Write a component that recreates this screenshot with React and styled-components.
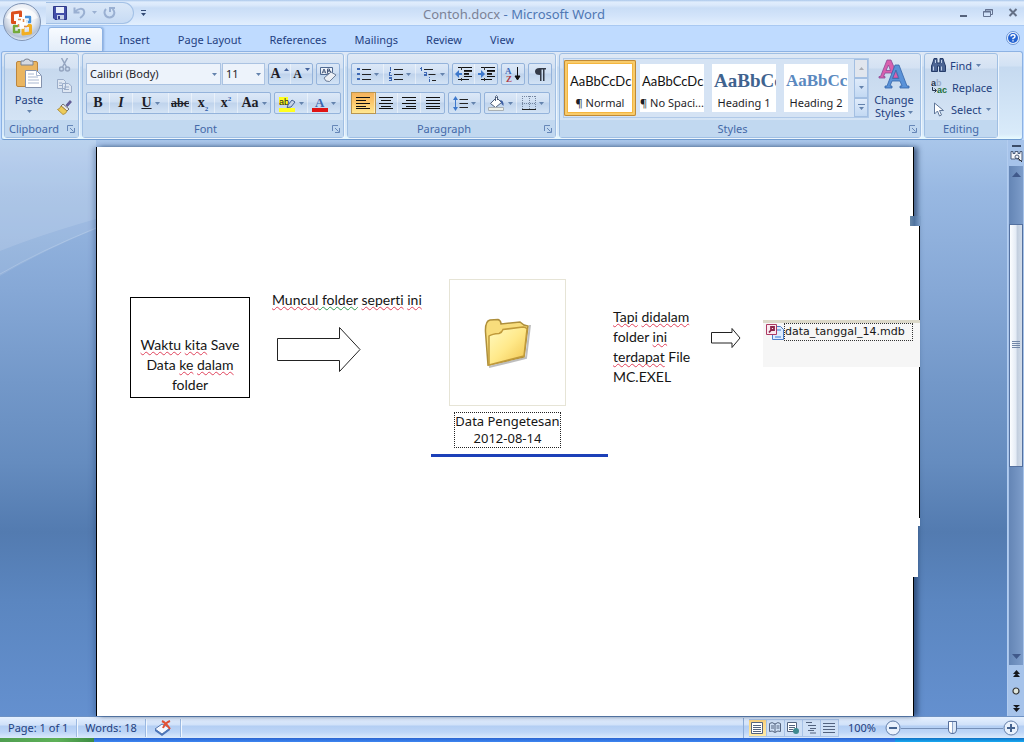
import * as React from 'react';
import styled, { createGlobalStyle, css } from 'styled-components';

const colors = {
  text: '#1f3f7f',
  label: '#4469a8',
  line: '#8fb2dc',
  arrow: '#6483ad',
  ink: '#1e1e28',
};

const uiFont = '"Noto Sans", "Open Sans", sans-serif';
const bodyFont = 'Lato, "Open Sans", sans-serif';

const GlobalStyle = createGlobalStyle`
  * {
    box-sizing: border-box;
  }

  body {
    margin: 0;
    font-family: ${uiFont};
    font-size: 11px;
    color: ${colors.text};
  }

  button,
  select {
    margin: 0;
    padding: 0;
    border: 0;
    background: none;
    color: inherit;
    font: inherit;
  }

  svg {
    display: block;
    flex: none;
  }
`;

const Window = styled.div`
  display: flex;
  flex-direction: column;
  min-height: 100vh;
  overflow: hidden;
`;

/* ---------- title bar ---------- */

const Header = styled.header`
  position: relative;
  background: #bfdbff;
`;

const TitleBar = styled.div`
  display: flex;
  align-items: center;
  height: 26px;
  padding: 0 6px 0 46px;
  border-bottom: 1px solid #a9c9f2;
  background: linear-gradient(#a9c6ea 0, #e0edfd 2px, #dbe9fb 5px, #c9ddf6 8px, #d3e4fa 16px, #e2effe 100%);
`;

const QuickAccess = styled.div`
  display: flex;
  align-items: center;
  gap: 6px;
  width: 88px;
  height: 22px;
  padding-left: 7px;
  border: 1px solid #a3c1e6;
  border-left: 0;
  border-radius: 0 11px 11px 0;
  background: linear-gradient(#dbe8f8, #c7dbf4);
`;

const PlainButton = styled.button`
  display: flex;
  align-items: center;
  justify-content: center;
  flex: none;
`;

const MoreButton = styled(PlainButton)`
  width: 18px;
  height: 20px;
`;

const Title = styled.h1`
  flex: 1;
  margin: 0;
  padding: 2px 52px 0 0;
  font-size: 13px;
  line-height: 20px;
  font-weight: 400;
  text-align: center;
  color: #5078b4;

  span {
    color: #7b8296;
  }
`;

const WindowButtons = styled.div`
  display: flex;
  align-items: center;
  justify-content: flex-end;
  gap: 15px;
  width: 90px;
`;

const OfficeButton = styled.button`
  position: absolute;
  top: 1px;
  left: 0;
  width: 44px;
  height: 44px;
`;

/* ---------- tabs ---------- */

const TabBar = styled.nav`
  display: flex;
  align-items: flex-end;
  height: 25px;
  padding: 0 4px 0 48px;
`;

const Tab = styled.button`
  height: 24px;
  margin-right: 4px;
  padding: 0 11px;
  border: 1px solid transparent;
  border-bottom: 0;
  border-radius: 3px 3px 0 0;
  line-height: 22px;
  white-space: nowrap;

  ${(props) =>
    props.$active &&
    css`
      border-color: #8db2e3;
      background: linear-gradient(#f8fbff, #e3edf9);
      box-shadow: 1px 0 2px rgba(90, 130, 190, 0.5);
    `}
`;

const HelpButton = styled(PlainButton)`
  height: 26px;
  margin-left: auto;
`;

/* ---------- ribbon ---------- */

const Ribbon = styled.div`
  display: flex;
  gap: 3px;
  height: 89px;
  margin: 0 1px;
  padding: 1px 2px;
  border: 1px solid #8db2e3;
  border-bottom-color: #6f9bd0;
  border-radius: 3px;
  background: linear-gradient(#dfe9f6, #d2e2f4 14px, #c6daf0 15px, #d9ebfa 82px, #e8fbff);
`;

const GroupBox = styled.section`
  display: flex;
  flex-direction: column;
  flex: none;
  width: ${(props) => props.$width}px;
  border: 1px solid #a0bfe3;
  border-radius: 3px;
  box-shadow: 1px 1px 0 #edf5fd;
  background: linear-gradient(#dfe9f5, #d4e2f3 14px, #c7d9ee 15px, #d8e7f7);
`;

const GroupBody = styled.div`
  display: flex;
  flex: 1;
  gap: 4px;
  padding: ${(props) => props.$top}px 3px 0;
`;

const GroupLabel = styled.div`
  display: flex;
  align-items: center;
  height: 17px;
  background: #c1d8f0;
  color: ${colors.label};

  span {
    flex: 1;
    line-height: 17px;
    text-align: center;
  }
`;

const Launcher = styled(PlainButton)`
  width: 15px;
  height: 15px;
`;

const Rows = styled.div`
  display: flex;
  flex-direction: column;
  gap: 7px;
`;

const Row = styled.div`
  display: flex;
  gap: 3px;
`;

const ButtonSet = styled.div`
  display: flex;
  height: 22px;
  border: 1px solid #94b3db;
  border-radius: 2px;
  background: linear-gradient(#dce8f7, #cfdff3 9px, #bfd3ec 10px, #d3e3f5);
`;

const Tool = styled.button`
  display: flex;
  align-items: center;
  justify-content: center;
  gap: 3px;
  width: ${(props) => props.$width || 23}px;
  border-right: 1px solid rgba(255, 255, 255, 0.45);
  font-family: 'Liberation Serif', serif;
  font-size: 14px;
  line-height: 18px;
  font-weight: 700;
  color: ${colors.ink};

  ${(props) =>
    props.$active &&
    css`
      background: linear-gradient(#f6b35d, #fbc468 40%, #ffe790);
      box-shadow: 0 0 0 1px #b9954f;
    `}

  &:last-child {
    border-right: 0;
  }

  small {
    font-size: 12px;
  }

  sub,
  sup {
    font-size: 7px;
    line-height: 0;
    color: #2c5ca8;
  }
`;

const Strike = styled.s`
  font-size: 12px;
`;

const ComboWrapper = styled.label`
  position: relative;
  display: block;
  width: ${(props) => props.$width}px;

  svg {
    position: absolute;
    right: 4px;
    top: 10px;
    pointer-events: none;
  }
`;

const Combo = styled.select`
  width: 100%;
  height: 22px;
  padding: 0 3px;
  appearance: none;
  border: 1px solid #abc3e2;
  border-radius: 0;
  background: #edf3fb;
  color: ${colors.ink};
  line-height: 20px;
`;

const Combos = styled.div`
  display: flex;
  gap: 1px;
`;

const Clipboard = styled.div`
  display: flex;
  gap: 7px;
`;

const BigButton = styled.button`
  display: flex;
  flex-direction: column;
  align-items: center;
  width: 42px;
  line-height: 13px;
`;

const BigLabel = styled.span`
  padding: 4px 0;
`;

const StackedLabel = styled.span`
  padding-top: 3px;
`;

const LabelLine = styled.span`
  display: flex;
  align-items: center;
  gap: 3px;
`;

const SmallIcons = styled.div`
  display: flex;
  flex-direction: column;
  align-items: center;
  gap: 7px;
`;

const EditList = styled.div`
  display: flex;
  flex-direction: column;
  padding-left: 3px;
`;

const EditButton = styled.button`
  display: flex;
  align-items: center;
  gap: 4px;
  height: 22px;
`;

/* ---------- style gallery ---------- */

const Gallery = styled.div`
  display: flex;
  height: 60px;
  border: 1px solid #b0c9e8;
  background: #d5e3f4;
`;

const StyleCard = styled.button`
  width: 72px;
  height: 56px;
  padding: 4px;
  margin-top: 1px;

  ${(props) =>
    props.$active &&
    css`
      border-radius: 2px;
      background: #f4b63f;
      box-shadow: inset 0 0 0 1px #c08a35, inset 0 0 0 3px #f8cb6b;
    `}
`;

const StylePreview = styled.span`
  display: block;
  width: 64px;
  height: 48px;
  overflow: hidden;
  background: #fff;
  color: ${colors.ink};
  text-align: center;
  white-space: nowrap;
`;

const Sample = styled.span`
  display: block;
  height: 31px;
  padding-left: 2px;
  overflow: hidden;
  text-align: left;
  font-family: ${(props) => (props.$heading ? '"Liberation Serif", serif' : bodyFont)};
  font-size: ${(props) => props.$size}px;
  line-height: 34px;
  font-weight: ${(props) => (props.$heading ? 700 : 400)};
  color: ${(props) => props.$color || '#111'};
`;

const SampleName = styled.span`
  display: block;
  line-height: 15px;
`;

const GalleryScroll = styled.div`
  display: flex;
  flex-direction: column;
  width: 14px;
  margin-left: 2px;
`;

const GalleryArrow = styled(PlainButton)`
  flex: 1;
  border: 1px solid #a3bfe2;
  background: ${(props) => (props.disabled ? '#e1e6ee' : 'linear-gradient(#dfebfa, #c3d9f3)')};
`;

/* ---------- work area ---------- */

const WorkArea = styled.div`
  display: flex;
  flex: 1;
`;

const Canvas = styled.main`
  position: relative;
  display: flex;
  flex: 1;
  min-width: 0;
  padding: 7px 93px 0 96px;
  background: linear-gradient(
    #a9c6ea 0,
    #98b8e2 9%,
    #86a8d6 26%,
    #7398c9 42%,
    #658cbf 56%,
    #537bb0 68%,
    #5b86c0 80%,
    #6490cf 100%
  );
`;

const Swoosh = styled.svg`
  position: absolute;
  top: 0;
  left: 0;
`;

const Page = styled.article`
  position: relative;
  flex: 1;
  min-width: 0;
  padding: 132px 0 0 33px;
  border: solid #000;
  border-width: 0 1px;
  background: #fff;
  box-shadow: 4px 0 5px rgba(30, 55, 95, 0.65), -3px 0 5px rgba(40, 70, 120, 0.3);
  color: #151515;
  font-family: ${bodyFont};
  font-variant-ligatures: none;
`;

/* pieces of the sheet that stick out past its right edge */
const Overhang = styled.span`
  position: absolute;
  left: 100%;
  top: ${(props) => props.$top}px;
  width: ${(props) => props.$width}px;
  height: ${(props) => props.$height}px;
  margin-left: -1px;
  border-right: ${(props) => (props.$edge ? '1px solid #000' : '0')};
  background: #fff;
`;

const Chip = styled.span`
  position: absolute;
  top: 69px;
  right: -8px;
  width: 11px;
  height: 10px;
  background: linear-gradient(90deg, #6888a8, #50739f 40%, #84a5cf);
`;

const Flow = styled.div`
  position: relative;
  display: flex;
  align-items: flex-start;

  > * {
    flex: none;
  }
`;

const StepBox = styled.div`
  width: 120px;
  height: 101px;
  margin-top: 18px;
  padding: 37px 4px 0;
  border: 1px solid #000;
  font-size: 14px;
  line-height: 20px;
  text-align: center;
`;

const ArrowStep = styled.div`
  width: 160px;
  margin: 11px 0 0 22px;
  font-size: 14px;
  line-height: 20px;
  white-space: nowrap;

  svg {
    margin: 17px 0 0 5px;
  }
`;

const FolderStep = styled.figure`
  display: flex;
  flex-direction: column;
  align-items: center;
  width: 177px;
  margin: 0 0 0 -1px;
  padding-right: 24px;
`;

const FolderFrame = styled.div`
  display: flex;
  align-items: center;
  justify-content: center;
  width: 117px;
  height: 127px;
  border: 1px solid #e6e4d6;
`;

const FolderName = styled.figcaption`
  margin: 6px 0;
  border: 1px dotted #222;
  font-family: ${uiFont};
  font-size: 13px;
  line-height: 17px;
  text-align: center;
  white-space: nowrap;
`;

const FolderRule = styled.div`
  align-self: flex-start;
  width: 177px;
  height: 3px;
  background: #1c40b8;
`;

const TextStep = styled.p`
  width: 92px;
  margin: 28px 5px 0;
  font-size: 14px;
  line-height: 20px;
  white-space: nowrap;
`;

const SmallArrow = styled.div`
  margin: 48px 22px 0 0;
`;

const FileStep = styled.div`
  display: flex;
  align-items: flex-start;
  width: 157px;
  height: 47px;
  margin-top: 41px;
  padding-left: 2px;
  border-top: 3px solid #dcd9c9;
  background: #f6f6f6;
`;

const FileName = styled.span`
  height: 18px;
  padding-right: 7px;
  border: 1px dotted #333;
  font-family: 'DejaVu Sans', sans-serif;
  font-size: 11px;
  line-height: 16px;
  white-space: nowrap;
`;

const Misspelt = styled.span`
  text-decoration: underline wavy ${(props) => (props.$grammar ? '#2f9a50' : '#e0415a')} 1px;
  text-decoration-skip-ink: none;
  text-underline-offset: 1px;
`;

/* ---------- scroll bar ---------- */

const ScrollColumn = styled.div`
  display: flex;
  flex-direction: column;
  align-items: center;
  flex: none;
  width: 17px;
  border-left: 1px solid #b3cdf0;
  background: #a6c3ea;
`;

const SplitHandle = styled.div`
  width: 9px;
  height: 2px;
  margin: 5px 0 3px;
  background: #3b4c68;
`;

const Track = styled.div`
  display: flex;
  flex-direction: column;
  align-items: center;
  flex: 1;
  width: 14px;
  margin-top: 3px;
  background: linear-gradient(90deg, #6485b5, #7d9dca);
`;

const TrackGap = styled.div`
  flex: ${(props) => props.$size};
`;

const Thumb = styled.div`
  display: flex;
  align-items: center;
  justify-content: center;
  flex: 242;
  width: 14px;
  border: 1px solid #53709f;
  background: linear-gradient(90deg, #fbfdff, #e4ebf5 50%, #c2cede 60%, #d4deeb);
`;

const ScrollButton = styled(PlainButton)`
  width: 14px;
  height: 17px;
`;

/* ---------- status bar ---------- */

const StatusBar = styled.footer`
  display: flex;
  align-items: center;
  height: 22px;
  border-top: 1px solid #6e92c4;
  background: linear-gradient(#e6f1ff, #d0e1f9 8px, #b3cef3 9px, #bdd5f7 15px, #dae9fc);
`;

const StatusItem = styled.div`
  display: flex;
  align-items: center;
  height: 18px;
  padding: 0 8px;
  border-right: 1px solid #9bb9e2;
  box-shadow: 1px 0 0 #f0f7ff;
`;

const ViewTools = styled.div`
  display: flex;
  align-items: center;
  height: 20px;
  margin-left: auto;
  padding: 0 5px;
  border-left: 1px solid #8eadd8;
`;

const ViewButton = styled(PlainButton)`
  width: 18px;
  height: 18px;
  border: 1px solid #a9c3e7;
  border-left: 0;
  background: ${(props) => (props.$active ? 'linear-gradient(#fbd37f, #ffeaa6)' : '#cfe0f6')};
`;

const ZoomValue = styled.span`
  padding: 0 9px;
`;

const ZoomSlider = styled.input`
  width: 102px;
  height: 16px;
  margin: 0;
  appearance: none;
  background: linear-gradient(#7690b8, #7690b8) 0 8px / 100% 1px no-repeat;

  &::-webkit-slider-thumb {
    appearance: none;
    width: 9px;
    height: 13px;
    border: 1px solid #566f9c;
    border-radius: 1px 1px 5px 5px;
    background: linear-gradient(90deg, #fff 3px, #8ea6cb 3px, #8ea6cb 4px, #dce8f8 4px);
  }
`;

const Taskbar = styled.div`
  display: flex;
  height: 4px;
  background: linear-gradient(#2a63cf, #3c86f2);
`;

const StartEdge = styled.div`
  width: 94px;
  background: linear-gradient(90deg, #4f9e50, #5eb158 60%, #3d8c43);
`;

const TrayEdge = styled.div`
  width: 129px;
  margin-left: auto;
  background: linear-gradient(#1070c4, #18aaf2);
`;

/* ---------- icons ---------- */

const Down = ({ color = colors.arrow }) => (
  <svg width="5" height="3" viewBox="0 0 5 3">
    <path d="M0 0h5L2.500 3z" fill={color} />
  </svg>
);

const OfficeLogo = () => (
  <svg width="44" height="44" viewBox="0 0 44 44">
    <defs>
      <radialGradient id="orb" cx=".5" cy=".35" r=".65">
        <stop offset="0" stopColor="#fff" />
        <stop offset=".55" stopColor="#e9edf4" />
        <stop offset=".85" stopColor="#b5c2d5" />
        <stop offset="1" stopColor="#e8f0fa" />
      </radialGradient>
    </defs>
    <circle cx="22" cy="21" r="18.5" fill="url(#orb)" stroke="#8195b5" />
    <path d="M6 17a17 15 0 0 1 32 0q-16 7-32 0z" fill="#fff" opacity=".65" />
    <g fill="none" strokeWidth="3" strokeLinejoin="round">
      <path d="M16 21.500h-3.500v-9.500l8-1v5" stroke="#dc4f1c" />
      <path d="M25 16h5v5h-4" stroke="#4590d8" strokeWidth="2.400" />
      <path d="M18 25h-4v6h5v-3" stroke="#74aa3a" strokeWidth="2.400" />
      <path d="M27 24.500h3.500v7.500l-7.500 1v-6" stroke="#f2ae22" />
    </g>
    <path d="M16 20h4v-4h4v4h4v4h-4v4h-4v-4h-4z" fill="#fff" opacity=".8" />
    <path d="M18 18.500h3M23.500 18v3M18.500 23v3M24 25.500h3" stroke="#e08a4c" strokeWidth="1.500" />
  </svg>
);

const SaveIcon = () => (
  <svg width="14" height="14" viewBox="0 0 14 14">
    <path d="M.5.5h13v13H2l-1.500-1.500z" fill="#434fa9" stroke="#2f3a88" />
    <path d="M3 1h8v6H3z" fill="#e9f0fb" />
    <path d="M4 9h7v4.500H4z" fill="#c7d3ea" />
    <path d="M5 10h2v3H5z" fill="#2f3a88" />
  </svg>
);

const UndoIcon = () => (
  <svg width="13" height="13" viewBox="0 0 13 13" fill="none" stroke="#9ab0d2" strokeWidth="2">
    <path d="M1.500 1.500v5h5M2 6c3-4 8-4 9-1s-1 5-4 7" />
  </svg>
);

const RedoIcon = () => (
  <svg width="13" height="13" viewBox="0 0 13 13" fill="none" stroke="#9ab0d2" strokeWidth="2">
    <path d="M3 3C0 6 2 11.500 6.500 11.500S13 6 9.500 3M7 6V2h5" />
  </svg>
);

const CustomizeIcon = () => (
  <svg width="5" height="6" viewBox="0 0 5 6">
    <path d="M0 0h5v1H0zM0 3h5L2.500 6z" fill="#334a75" />
  </svg>
);

const HelpIcon = () => (
  <svg width="14" height="14" viewBox="0 0 14 14">
    <circle cx="7" cy="7" r="6.500" fill="#eaf3ff" stroke="#6c94d4" />
    <circle cx="7" cy="7" r="5" fill="#2463d2" />
    <path d="M5 5.500Q5 3.800 7 3.800T9 5.500Q9 6.700 7 7.300v1M7 9.200v1.400" fill="none" stroke="#fff" strokeWidth="1.400" />
  </svg>
);

const LauncherIcon = () => (
  <svg width="8" height="8" viewBox="0 0 8 8" fill="none" stroke="#6687b8">
    <path d="M.5 6V.5H6M3 3l3.500 3.500M7.500 3v4.500H3" />
  </svg>
);

const PasteIcon = () => (
  <svg width="28" height="31" viewBox="0 0 28 31">
    <rect x="1.500" y="3.500" width="21" height="25" rx="1.500" fill="#eab560" stroke="#bb853e" />
    <path d="M6 3h3q0-2 3-2t3 2h3v4H6z" fill="#d5d9e2" stroke="#7b8495" />
    <path d="M10.500 12.500h11l5 5v12h-16z" fill="#fff" stroke="#8492ad" />
    <path d="M21.500 12.500v5h5M13 16h6M13 19h10M13 22h11M13 25h11" fill="none" stroke="#a9b8d2" />
  </svg>
);

const CutIcon = () => (
  <svg width="12" height="14" viewBox="0 0 12 14" fill="none" stroke="#94a5c0" strokeWidth="1.500">
    <path d="M2.500 0l5 9M8.500 0l-5 9" />
    <circle cx="2.500" cy="11" r="2" />
    <circle cx="8.500" cy="11" r="2" />
  </svg>
);

const CopyIcon = () => (
  <svg width="15" height="14" viewBox="0 0 15 14" fill="#dfe7f2" stroke="#9badc9">
    <path d="M.5.5h6l2 2v7h-8zM5.500 4.500h6l3 2.500v6.500h-9z" />
    <path d="M7 8h5M7 10.500h5M2 4h3M2 6.500h3" />
  </svg>
);

const BrushIcon = () => (
  <svg width="15" height="15" viewBox="0 0 15 15">
    <path d="M9 5l4-4.500 1.500 1.500-4 4.500z" fill="#635c9d" stroke="#463f76" strokeWidth=".6" />
    <path d="M6 4l6 5-2 2-6-5z" fill="#e8e8ec" stroke="#555" strokeWidth=".8" />
    <path d="M4 6l6 5q-1 3-4 3.500L.5 9.500Q3 9 4 6z" fill="#eccb5a" stroke="#a8842c" strokeWidth=".8" />
  </svg>
);

const EraserIcon = () => (
  <svg width="18" height="17" viewBox="0 0 18 17">
    <path d="M1.500 1.500h12v7h-12z" fill="#eef3fa" stroke="#506a92" />
    <path d="M3 7.500L5 3l2 4.500M4 6h2M8.500 3v4.500M8.500 3h2v2h-2M8.500 5h3v2.500h-3" fill="none" stroke="#3c4e70" strokeWidth=".9" />
    <path d="M5 12l7-6 5 3-6.500 6.500-3.500-.5z" fill="#eceff5" stroke="#6d7e99" />
  </svg>
);

const Caret = ({ flip }) => (
  <svg width="5" height="12" viewBox="0 0 5 12">
    <path d={flip ? 'M0 0h5L2.500 3z' : 'M0 3h5L2.500 0z'} fill="#45639b" />
  </svg>
);

const HighlightIcon = () => (
  <svg width="17" height="17" viewBox="0 0 17 17">
    <path d="M0 13h16v4H0zM0 2h9v8H0z" fill="#ffff20" />
    <text x="0" y="10" fontFamily="Liberation Sans, sans-serif" fontSize="9" fontWeight="400" fill="#222">
      ab
    </text>
    <path d="M9 10l4-5 3 2-4 5-4 .5z" fill="#c5d2e7" stroke="#45608f" />
  </svg>
);

const FontColorIcon = () => (
  <svg width="16" height="17" viewBox="0 0 16 17">
    <path d="M0 13h16v4H0z" fill="#e01414" />
    <text x="3" y="12" fontFamily="Liberation Serif, serif" fontSize="13" fontWeight="700" fill="#3d66ad">
      A
    </text>
  </svg>
);

const listMarks = {
  bullet: 'M0 1h3v2H0zM0 6h3v2H0zM0 11h3v2H0z',
  number: 'M1 0h1v4H1zM0 5h2v1h-1v2h2v1H0zM0 10h3v4H0v-1h2v-1H0z',
};

const ListIcon = ({ kind }) => (
  <svg width="14" height="14" viewBox="0 0 14 14">
    <path d={listMarks[kind]} fill="#3d68b4" />
    <path d="M5 2.500h9M5 7.500h9M5 12.500h9" stroke="#222" />
  </svg>
);

const MultiListIcon = () => (
  <svg width="17" height="15" viewBox="0 0 17 15">
    <path d="M1 0h1v4H1zM0 1h1v1H0zM4 5h3v4H4V7h2V6H4zM9 10h1v1H9zM9 12h1v3H9z" fill="#3d68b4" />
    <path d="M4 2.500h9M8.500 7.500h7M12 13.500h4" stroke="#222" />
  </svg>
);

const IndentIcon = ({ right }) => (
  <svg width="17" height="14" viewBox="0 0 17 14">
    <path d="M3 .5h14M9 3.500h8M9 6.500h5M9 9.500h8M3 12.500h11" stroke="#111" />
    <path d="M9 4.500h8M9 7.500h5M6.500 0v3M6.500 11v3" stroke="#333" />
    <path d={right ? 'M0 6h3V3l4 4-4 4V8H0z' : 'M7 6H4V3L0 7l4 4V8h3z'} fill="#3d78cc" />
  </svg>
);

const SortIcon = () => (
  <svg width="16" height="18" viewBox="0 0 16 18">
    <text x="0" y="9" fontFamily="Liberation Serif, serif" fontSize="9" fontWeight="700" fill="#3d68b4">
      A
    </text>
    <text x="1" y="17" fontFamily="Liberation Serif, serif" fontSize="9" fontWeight="700" fill="#b03a48">
      Z
    </text>
    <path d="M12.500 2v12M10 11l2.500 4 2.500-4z" fill="#111" stroke="#111" />
  </svg>
);

const PilcrowIcon = () => (
  <svg width="11" height="13" viewBox="0 0 11 13">
    <path d="M4.500 0H11v1.500H9.500V13H8V1.500H6.500V13H5V7Q0 7 0 3.500T4.500 0z" fill="#333a48" />
  </svg>
);

const alignPaths = {
  left: 'M0 .5h14M0 3.500h10M0 6.500h14M0 9.500h10M0 11.500h14',
  center: 'M0 .5h14M2 3.500h10M0 6.500h14M2 9.500h10M0 11.500h14',
  right: 'M0 .5h14M4 3.500h10M0 6.500h14M4 9.500h10M0 11.500h14',
  justify: 'M0 .5h14M0 3.500h14M0 6.500h14M0 9.500h14M0 11.500h14',
};

const AlignIcon = ({ kind }) => (
  <svg width="14" height="12" viewBox="0 0 14 12">
    <path d={alignPaths[kind]} stroke="#111" />
  </svg>
);

const SpacingIcon = () => (
  <svg width="15" height="15" viewBox="0 0 15 15">
    <path d="M2 4H0l2.500-4L5 4H3v7h2l-2.500 4L0 11h2z" fill="#3d78cc" />
    <path d="M6.500 3.500H15M6.500 7.500H15M6.500 11.500H15" stroke="#222" />
  </svg>
);

const BucketIcon = () => (
  <svg width="17" height="16" viewBox="0 0 17 16">
    <path d="M2.500 8.500l6-6 5 5-6 5z" fill="#fff" stroke="#4c5c78" />
    <path d="M7.500 6V1.500q1-2 2 0V5" fill="none" stroke="#4c5c78" />
    <path d="M12 5q4 0 3.500 6Q13 9 12 5z" fill="#3d5fa3" />
    <path d="M.5 12.500h15v3H.5z" fill="#eef0e8" stroke="#aab0b4" />
  </svg>
);

const BorderIcon = () => (
  <svg width="14" height="14" viewBox="0 0 14 14">
    <path d="M.5 0v14M7.500 0v14M13.500 0v14M0 .5h14M0 7.500h14" fill="none" stroke="#74859f" strokeDasharray="1 1" />
    <path d="M0 13.500h14" stroke="#222" />
  </svg>
);

const StylesIcon = () => (
  <svg width="32" height="32" viewBox="0 0 32 32">
    <path
      fillRule="evenodd"
      d="M1 20v-1.500h1.500L9 2h4l7 16.500V20h-6v-1.500h1L13.500 15H7l-1.500 3.500H7V20zM8 12.500h4.500L10.500 7z"
      fill="#d860ae"
      stroke="#8b4a96"
      strokeWidth=".8"
    />
    <path
      fillRule="evenodd"
      d="M7 30v-2h2L17 7h4l8 21h2v2h-9v-2h2l-2-5h-8l-2 5h2v2zM14.500 20.500h6.500L18 12z"
      fill="#5a92d8"
      stroke="#3264a9"
      strokeWidth=".8"
    />
  </svg>
);

const FindIcon = () => (
  <svg width="15" height="14" viewBox="0 0 15 14">
    <path d="M2 4l1-3.500h3V5h3V.5h3L13 4l1.500 4v5.500h-6V8h-2v5.500h-6V8z" fill="#4c6594" stroke="#253c69" />
    <path d="M2.500 8.500v4M10.500 8.500v4M4.500 2v3M10.500 2v3" stroke="#c0d0e8" />
  </svg>
);

const ReplaceIcon = () => (
  <svg width="17" height="18" viewBox="0 0 17 18" fontFamily="Liberation Sans, sans-serif" fontWeight="700" fontSize="9">
    <text x="0" y="8" fill="#26334d">
      a<tspan fill="#9aacca">b</tspan>
    </text>
    <path d="M1.500 9v3.500H5M3.500 10.500l2 2-2 2" fill="none" stroke="#26334d" />
    <text x="6" y="15" fill="#22703a">
      ac
    </text>
  </svg>
);

const CursorIcon = () => (
  <svg width="16" height="15" viewBox="0 0 16 15">
    <path d="M3.500 1v11l3-3 2 5 2-1-2-4.500h4z" fill="#fff" stroke="#5f7699" />
  </svg>
);

const FolderIcon = () => (
  <svg width="48" height="50" viewBox="0 0 48 50">
    <defs>
      <linearGradient id="folderFront" x1="0" y1="0" x2="1" y2="1">
        <stop offset="0" stopColor="#fffac0" />
        <stop offset=".5" stopColor="#ffe98a" />
        <stop offset="1" stopColor="#f0c24a" />
      </linearGradient>
    </defs>
    <path d="M5 49l37-9 4-33" fill="none" stroke="#a3a3a3" strokeWidth="2" opacity=".7" />
    <path d="M1.500 14Q1 3 6 2l8-.5q3 1 3 4.500l19-2 4 3 4 1-4 31L4 47z" fill="#f8dd7c" stroke="#ae8f3c" strokeWidth="1.500" />
    <path d="M5 18q3-2 10-2.500 3-1 4-4L39 9q3 0 4 2l-3 27-35 9z" fill="url(#folderFront)" stroke="#c09a3a" strokeWidth="1.500" />
  </svg>
);

const AccessIcon = () => (
  <svg width="19" height="18" viewBox="0 0 19 18">
    <path d="M7.500 3.500h8l3 3v10h-11z" fill="#dcecff" stroke="#4c7cc6" />
    <path d="M10 13h6v2h-6zM12 6h4v2h-4z" fill="#8bb2e8" />
    <path d="M1.500 1.500h10v10h-10z" fill="#fae9f0" stroke="#ad3a63" />
    <path d="M4 9.500L7 6M6 4h3v3H6z" fill="none" stroke="#8c2549" strokeWidth="1.800" />
  </svg>
);

const RulerIcon = () => (
  <svg width="13" height="13" viewBox="0 0 13 13">
    <path d="M1 1.500h2v2h2v-2h3v2h2v-2h2v9H9L7 8 5 9H1z" fill="#f3f5f9" stroke="#4d5d7a" />
    <circle cx="7" cy="7" r="2" fill="none" stroke="#4d5d7a" />
    <path d="M8 8l4 4" stroke="#333" />
  </svg>
);

const DoubleArrow = ({ down }) => (
  <svg width="7" height="8" viewBox="0 0 7 8">
    <path d={down ? 'M0 1h7L3.500 4zM0 4h7L3.500 8z' : 'M0 4h7L3.500 0zM0 7h7L3.500 3z'} fill="#15171c" />
  </svg>
);

const ProofIcon = () => (
  <svg width="18" height="16" viewBox="0 0 18 16">
    <path d="M1 9l7-5 8 4-8 6z" fill="#f3f7ff" stroke="#5676ac" />
    <path d="M1 9v2l7 5 8-6V8l-8 6z" fill="#4b74b8" />
    <path d="M8 1q4 2 8 8M16 1Q11 3 9 8" fill="none" stroke="#e25236" strokeWidth="2" />
  </svg>
);

const viewPaths = {
  print: 'M.5.5h11v11H.5zM2 3.500h8M2 5.500h8M2 7.500h8M2 9.500h8',
  reading: 'M6 2Q3-.5.5 1.500v8Q3 8 6 10.500 9 8 11.500 9.500v-8Q9-.5 6 2v8M2 4h3M2 6h3M7.500 4h3M7.500 6h3',
  web: 'M.5.5h9v9h-9zM2 3.500h6M2 5.500h6M2 7.500h4',
  outline: 'M1 .5h6M3 3.500h8M5 6.500h6M3 8.500h6M5 11h6',
  draft: 'M0 1.500h12M0 4.500h12M0 7.500h12M0 10.500h12',
};

const ViewIcon = ({ kind }) => (
  <svg width="12" height="12" viewBox="0 0 12 12">
    <path d={viewPaths[kind]} fill={kind === 'print' || kind === 'web' ? '#fff' : 'none'} stroke="#53637f" />
    {kind === 'web' && <circle cx="9" cy="9" r="3" fill="#3e8a8f" />}
  </svg>
);

const ZoomIcon = ({ plus }) => (
  <svg width="16" height="16" viewBox="0 0 16 16">
    <circle cx="8" cy="8" r="7" fill="#e9f1fc" stroke="#6480ab" />
    <path d={plus ? 'M4 8h8M8 4v8' : 'M4 8h8'} stroke="#45638f" strokeWidth="2" />
  </svg>
);

/* ---------- parts ---------- */

const Group = ({ label, width, top = 9, launcher = true, children }) => (
  <GroupBox $width={width} aria-label={label}>
    <GroupBody $top={top}>{children}</GroupBody>
    <GroupLabel>
      <span>{label}</span>
      {launcher && (
        <Launcher aria-label={`${label} options`}>
          <LauncherIcon />
        </Launcher>
      )}
    </GroupLabel>
  </GroupBox>
);

const ComboBox = ({ label, width, value }) => (
  <ComboWrapper $width={width}>
    <Combo aria-label={label} defaultValue={value}>
      <option>{value}</option>
    </Combo>
    <Down />
  </ComboWrapper>
);

const tabs = ['Home', 'Insert', 'Page Layout', 'References', 'Mailings', 'Review', 'View'];

const gallery = [
  { name: '¶ Normal', sample: 'AaBbCcDc', size: 13 },
  { name: '¶ No Spaci...', sample: 'AaBbCcDc', size: 13 },
  { name: 'Heading 1', sample: 'AaBbCc', size: 19, heading: true, color: '#3f638f' },
  { name: 'Heading 2', sample: 'AaBbCc', size: 17, heading: true, color: '#5b89bf' },
];

const TitleRow = () => (
  <TitleBar>
    <QuickAccess>
      <PlainButton aria-label="Save">
        <SaveIcon />
      </PlainButton>
      <PlainButton aria-label="Undo">
        <UndoIcon />
      </PlainButton>
      <Down color="#9ab0d2" />
      <PlainButton aria-label="Redo">
        <RedoIcon />
      </PlainButton>
    </QuickAccess>
    <MoreButton aria-label="Customize">
      <CustomizeIcon />
    </MoreButton>
    <Title>
      <span>Contoh.docx</span> - Microsoft Word
    </Title>
    <WindowButtons>
      <PlainButton aria-label="Minimize">
        <svg width="9" height="9" viewBox="0 0 9 9">
          <path d="M1 8h7" stroke="#56637c" strokeWidth="2" />
        </svg>
      </PlainButton>
      <PlainButton aria-label="Restore">
        <svg width="10" height="8" viewBox="0 0 10 8" fill="none" stroke="#647390">
          <path d="M2.500 2V.5h7v5H8M2 1h8" />
          <path d="M.5 2.500h7v5h-7zM0 3h8" />
        </svg>
      </PlainButton>
      <PlainButton aria-label="Close">
        <svg width="10" height="9" viewBox="0 0 10 9">
          <path d="M1.500 1l7 7M8.500 1l-7 7" stroke="#647086" strokeWidth="2" />
        </svg>
      </PlainButton>
    </WindowButtons>
  </TitleBar>
);

const FontGroup = () => (
  <Group label="Font" width={262}>
    <Rows>
      <Row>
        <Combos>
          <ComboBox label="Font" width={135} value="Calibri (Body)" />
          <ComboBox label="Font size" width={43} value="11" />
        </Combos>
        <ButtonSet>
          <Tool $width={22} aria-label="Grow font">
            A<Caret />
          </Tool>
          <Tool $width={21} aria-label="Shrink font">
            <small>A</small>
            <Caret flip />
          </Tool>
        </ButtonSet>
        <ButtonSet>
          <Tool $width={22} aria-label="Clear formatting">
            <EraserIcon />
          </Tool>
        </ButtonSet>
      </Row>
      <Row>
        <ButtonSet>
          <Tool>B</Tool>
          <Tool>
            <i>I</i>
          </Tool>
          <Tool $width={36}>
            <u>U</u>
            <Down />
          </Tool>
          <Tool>
            <Strike>abc</Strike>
          </Tool>
          <Tool>
            <span>
              x<sub>2</sub>
            </span>
          </Tool>
          <Tool>
            <span>
              x<sup>2</sup>
            </span>
          </Tool>
          <Tool $width={32}>
            Aa
            <Down />
          </Tool>
        </ButtonSet>
        <ButtonSet>
          <Tool $width={33} aria-label="Highlight">
            <HighlightIcon />
            <Down />
          </Tool>
          <Tool $width={32} aria-label="Font color">
            <FontColorIcon />
            <Down />
          </Tool>
        </ButtonSet>
      </Row>
    </Rows>
  </Group>
);

const ParagraphGroup = () => (
  <Group label="Paragraph" width={209}>
    <Rows>
      <Row>
        <ButtonSet>
          <Tool $width={32} aria-label="Bullets">
            <ListIcon kind="bullet" />
            <Down />
          </Tool>
          <Tool $width={32} aria-label="Numbering">
            <ListIcon kind="number" />
            <Down />
          </Tool>
          <Tool $width={32} aria-label="Multilevel list">
            <MultiListIcon />
            <Down />
          </Tool>
        </ButtonSet>
        <ButtonSet>
          <Tool $width={22} aria-label="Decrease indent">
            <IndentIcon />
          </Tool>
          <Tool $width={22} aria-label="Increase indent">
            <IndentIcon right />
          </Tool>
        </ButtonSet>
        <ButtonSet>
          <Tool $width={22} aria-label="Sort">
            <SortIcon />
          </Tool>
        </ButtonSet>
        <ButtonSet>
          <Tool $width={22} aria-label="Show marks">
            <PilcrowIcon />
          </Tool>
        </ButtonSet>
      </Row>
      <Row>
        <ButtonSet>
          {['left', 'center', 'right', 'justify'].map((kind) => (
            <Tool key={kind} $active={kind === 'left'} aria-label={`Align ${kind}`}>
              <AlignIcon kind={kind} />
            </Tool>
          ))}
        </ButtonSet>
        <ButtonSet>
          <Tool $width={31} aria-label="Line spacing">
            <SpacingIcon />
            <Down />
          </Tool>
        </ButtonSet>
        <ButtonSet>
          <Tool $width={32} aria-label="Shading">
            <BucketIcon />
            <Down />
          </Tool>
          <Tool $width={32} aria-label="Borders">
            <BorderIcon />
            <Down />
          </Tool>
        </ButtonSet>
      </Row>
    </Rows>
  </Group>
);

const StylesGroup = () => (
  <Group label="Styles" width={362} top={4}>
    <Gallery>
      {gallery.map((item, index) => (
        <StyleCard key={item.name} $active={index === 0}>
          <StylePreview>
            <Sample $size={item.size} $heading={item.heading} $color={item.color}>
              {item.sample}
            </Sample>
            <SampleName>{item.name}</SampleName>
          </StylePreview>
        </StyleCard>
      ))}
      <GalleryScroll>
        <GalleryArrow disabled aria-label="Previous styles">
          <svg width="5" height="3" viewBox="0 0 5 3">
            <path d="M0 3h5L2.500 0z" fill="#a9adb5" />
          </svg>
        </GalleryArrow>
        <GalleryArrow aria-label="Next styles">
          <Down />
        </GalleryArrow>
        <GalleryArrow aria-label="More styles">
          <svg width="7" height="6" viewBox="0 0 7 6">
            <path d="M0 0h7v1H0zM1 3h5L3.500 6z" fill={colors.arrow} />
          </svg>
        </GalleryArrow>
      </GalleryScroll>
    </Gallery>
    <BigButton>
      <StylesIcon />
      <StackedLabel>Change</StackedLabel>
      <LabelLine>
        Styles <Down />
      </LabelLine>
    </BigButton>
  </Group>
);

const Document = () => (
  <Page>
    <Chip />
    <Overhang $top={79} $width={8} $height={292} $edge />
    <Overhang $top={371} $width={8} $height={8} />
    <Overhang $top={379} $width={6} $height={51} />
    <Flow>
      <StepBox>
        <Misspelt>Waktu</Misspelt> <Misspelt>kita</Misspelt> Save
        <br />
        Data <Misspelt>ke</Misspelt> <Misspelt>dalam</Misspelt>
        <br />
        folder
      </StepBox>
      <ArrowStep>
        <Misspelt>Muncul</Misspelt>
        <Misspelt $grammar> folder</Misspelt> <Misspelt>seperti</Misspelt> <Misspelt>ini</Misspelt>
        <svg width="85" height="46" viewBox="0 0 85 46">
          <path d="M.5 11.500h62V.5L83 22.500l-20.500 22V33.500H.5z" fill="#fff" stroke="#222" />
        </svg>
      </ArrowStep>
      <FolderStep>
        <FolderFrame>
          <FolderIcon />
        </FolderFrame>
        <FolderName>
          Data Pengetesan
          <br />
          2012-08-14
        </FolderName>
        <FolderRule />
      </FolderStep>
      <TextStep>
        <Misspelt>Tapi</Misspelt> <Misspelt>didalam</Misspelt>
        <br />
        folder <Misspelt>ini</Misspelt>
        <br />
        <Misspelt>terdapat</Misspelt> File
        <br />
        MC.EXEL
      </TextStep>
      <SmallArrow>
        <svg width="31" height="22" viewBox="0 0 31 22">
          <path d="M1.500 5.500h20.500v-4L30 11l-8 9.500V16H1.500z" fill="#fff" stroke="#222" />
        </svg>
      </SmallArrow>
      <FileStep>
        <AccessIcon />
        <FileName>data_tanggal_14.mdb</FileName>
      </FileStep>
    </Flow>
  </Page>
);

const ScrollBar = () => (
  <ScrollColumn>
    <SplitHandle />
    <PlainButton aria-label="Ruler">
      <RulerIcon />
    </PlainButton>
    <Track>
      <ScrollButton aria-label="Scroll up">
        <svg width="9" height="5" viewBox="0 0 9 5">
          <path d="M0 5h9L4.500 0z" fill="#40598a" />
        </svg>
      </ScrollButton>
      <TrackGap $size={41} />
      <Thumb>
        <svg width="8" height="8" viewBox="0 0 8 8">
          <path d="M0 .5h8M0 2.500h8M0 4.500h8M0 6.500h8" stroke="#7287a8" />
        </svg>
      </Thumb>
      <TrackGap $size={182} />
      <ScrollButton aria-label="Scroll down">
        <svg width="9" height="5" viewBox="0 0 9 5">
          <path d="M0 0h9L4.500 5z" fill="#40598a" />
        </svg>
      </ScrollButton>
    </Track>
    <ScrollButton aria-label="Previous page">
      <DoubleArrow />
    </ScrollButton>
    <ScrollButton aria-label="Browse object">
      <svg width="8" height="8" viewBox="0 0 8 8">
        <circle cx="4" cy="4" r="3" fill="#dfe6dc" stroke="#333" strokeWidth="1.200" />
      </svg>
    </ScrollButton>
    <ScrollButton aria-label="Next page">
      <DoubleArrow down />
    </ScrollButton>
  </ScrollColumn>
);

const App = () => (
  <Window>
    <GlobalStyle />
    <Header>
      <TitleRow />
      <TabBar>
        {tabs.map((tab) => (
          <Tab key={tab} $active={tab === 'Home'}>
            {tab}
          </Tab>
        ))}
        <HelpButton aria-label="Help">
          <HelpIcon />
        </HelpButton>
      </TabBar>
      <Ribbon>
        <Group label="Clipboard" width={75} top={4}>
          <Clipboard>
            <BigButton>
              <PasteIcon />
              <BigLabel>Paste</BigLabel>
              <Down />
            </BigButton>
            <SmallIcons>
              <PlainButton aria-label="Cut">
                <CutIcon />
              </PlainButton>
              <PlainButton aria-label="Copy">
                <CopyIcon />
              </PlainButton>
              <PlainButton aria-label="Format painter">
                <BrushIcon />
              </PlainButton>
            </SmallIcons>
          </Clipboard>
        </Group>
        <FontGroup />
        <ParagraphGroup />
        <StylesGroup />
        <Group label="Editing" width={74} top={0} launcher={false}>
          <EditList>
            <EditButton>
              <FindIcon />
              Find <Down />
            </EditButton>
            <EditButton>
              <ReplaceIcon />
              Replace
            </EditButton>
            <EditButton>
              <CursorIcon />
              Select <Down />
            </EditButton>
          </EditList>
        </Group>
      </Ribbon>
      <OfficeButton aria-label="Office">
        <OfficeLogo />
      </OfficeButton>
    </Header>
    <WorkArea>
      <Canvas>
        <Swoosh width="96" height="140" viewBox="0 0 96 140">
          <path d="M0 0h96v79Q40 95 0 111z" fill="#fff" opacity=".12" />
          <path d="M0 0h96v89Q40 112 0 136z" fill="#fff" opacity=".1" />
          <path d="M96 88Q40 111 0 134" fill="none" stroke="#fff" opacity=".18" />
        </Swoosh>
        <Document />
      </Canvas>
      <ScrollBar />
    </WorkArea>
    <StatusBar>
      <StatusItem>Page: 1 of 1</StatusItem>
      <StatusItem>Words: 18</StatusItem>
      <StatusItem>
        <ProofIcon />
      </StatusItem>
      <ViewTools>
        {Object.keys(viewPaths).map((kind) => (
          <ViewButton key={kind} $active={kind === 'print'} aria-label={`${kind} view`}>
            <ViewIcon kind={kind} />
          </ViewButton>
        ))}
        <ZoomValue>100%</ZoomValue>
        <PlainButton aria-label="Zoom out">
          <ZoomIcon />
        </PlainButton>
        <ZoomSlider type="range" min="0" max="100" defaultValue="50" aria-label="Zoom" />
        <PlainButton aria-label="Zoom in">
          <ZoomIcon plus />
        </PlainButton>
      </ViewTools>
    </StatusBar>
    <Taskbar>
      <StartEdge />
      <TrayEdge />
    </Taskbar>
  </Window>
);

export default App;
